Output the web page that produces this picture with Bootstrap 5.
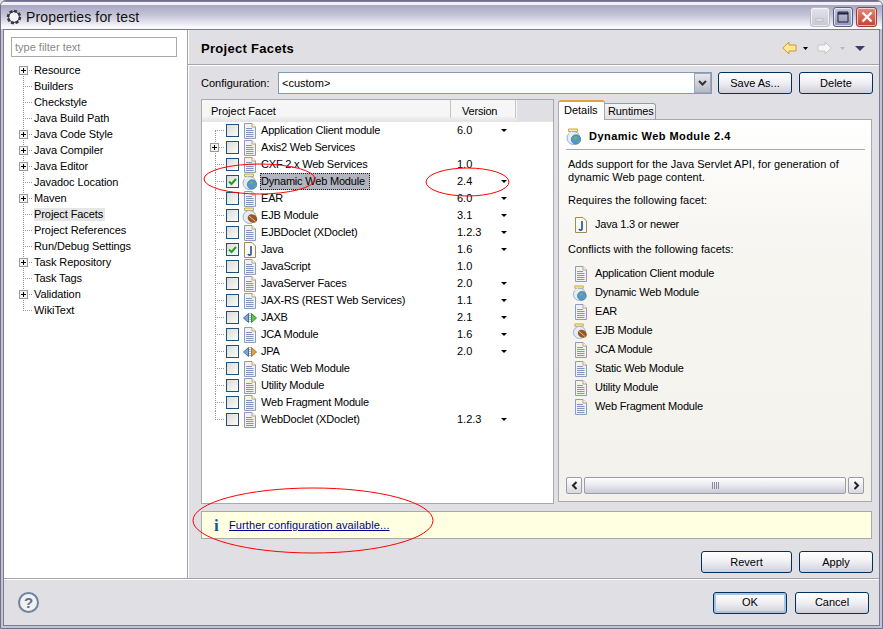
<!DOCTYPE html>
<html lang="en"><head><meta charset="utf-8"><title>Properties for test</title>
<link href="https://cdn.jsdelivr.net/npm/bootstrap@5.3.0/dist/css/bootstrap.min.css" rel="stylesheet">
<style>
html,body{margin:0;background:#e0dfe3}
body{font:11px/13px "Liberation Sans",Arial,sans-serif;color:#000;width:883px;height:629px;overflow:hidden;position:relative}
.dlg{width:883px;height:629px;border:1px solid #6f6f8a;border-radius:6px 6px 0 0;background:#c3c3d3;padding:0 2px 2px;display:flex;flex-direction:column}
.ttl{height:28px;flex:none;display:flex;align-items:center;padding:4px 5px 0 5px;background:linear-gradient(#7d7d98 0 1px,#f0f0f6 1px 4px,#a6a6c2 4px,#c4c4d8 14px,#e6e6ee 22px,#fafafc 26px,#fafafc 28px);margin:0 -2px;border-radius:5px 5px 0 0}
.ttl-txt{font:14px/18px "Liberation Sans",sans-serif;margin-left:4px;color:#111;letter-spacing:.15px}
.wbt{width:20px;height:20px;border-radius:3px;margin-left:3px;display:flex;align-items:center;justify-content:center;box-shadow:inset 0 0 0 1px rgba(255,255,255,.65)}
.wb-min{background:linear-gradient(#e3e3ea,#c6c7d4);border:1px solid #b9b9c9}
.wb-max{background:linear-gradient(#c3c7da,#9297b6);border:1px solid #5b6084}
.wb-close{background:linear-gradient(#e68a7a,#c63f30);border:1px solid #a23a30;width:21px}
.inner{flex:1;display:flex;flex-direction:column;border:1px solid #7d7d90;background:#e0dfe3;min-height:0}
.mid{flex:1;display:flex;min-height:0;border-bottom:1px solid #a3a3a8}
.side{width:184px;flex:none;background:#fff;border-right:1px solid #a3a3a8;box-shadow:1px 0 0 #fff;padding:7px 10px 0 7px}
.flt{height:20px;width:166px;border:1px solid #a9aaae;border-radius:0;padding:0 3px;font:inherit;color:#888}
.flt::placeholder{color:#8a8a8a;opacity:1}
.stree{margin:5px 0 0 2px;letter-spacing:-.08px}
.srow{height:16px;display:flex;align-items:center;white-space:nowrap}
.stw{width:20px;height:16px;flex:none;display:flex;align-items:center;margin-right:1px;background-image:repeating-linear-gradient(to bottom,#999 0 1px,transparent 1px 2px),repeating-linear-gradient(to right,#999 0 1px,transparent 1px 2px);background-size:1px 100%,9px 1px;background-position:10px 0,10px center;background-repeat:no-repeat}
.stw-f{background-size:1px 50%,9px 1px;background-position:10px bottom,10px center}
.stw-l{background-size:1px 50%,9px 1px;background-position:10px top,10px center}
.pl{width:9px;height:9px;flex:none;border:1px solid #9a9a9a;background:linear-gradient(#000,#000) center/5px 1px no-repeat,linear-gradient(#000,#000) center/1px 5px no-repeat,#f3f3ee;margin-left:6px}
.sel-s{background:#e6e6e6;padding:0 2px 0 0}
.mn{flex:1;min-width:0;padding:0 6px 0 0}
.mn-h{height:35px;border-bottom:1px solid #a3a3a8;box-shadow:0 1px 0 #fff;margin-right:-6px;padding:2px 13px 0 13px;display:flex;align-items:center}
.mn-t{font-weight:700;font-size:13px;flex:1;letter-spacing:.3px}
.cfg{display:flex;align-items:center;margin:7px 0 0 13px;height:22px}
.cfg-l{width:77px;flex:none}
.cmb{width:434px;height:22px;border:1px solid #7f9db9;background:#fff;display:flex;align-items:center;padding-left:3px;margin-right:6px}
.cmb-t{flex:1}
.cmb-b{width:17px;height:20px;background:linear-gradient(#e8e8ee,#b9b9c6);border:1px solid #a4a4b2;display:flex;align-items:center;justify-content:center}
.xbtn{width:74px;height:22px;padding:0;border:1px solid #00305f;border-radius:3px;background:linear-gradient(#fff 0,#f1f1f4 45%,#cfcfdd 100%);font:inherit;color:#000;line-height:19px}
.xbtn:hover{background:#eee;color:#000}
.xbtn-def{box-shadow:inset 0 0 0 2px #a5c4e9}
.xbtn-w{width:91px}
.cols{display:flex;margin:5px 0 0 13px;height:405px}
.tbl{width:353px;flex:none;background:#fff;border:1px solid #a9aab0}
.thd{height:22px;display:flex;background:linear-gradient(#f6f6f6,#f6f6f6 75%,#e4e4e4);border-bottom:1px solid #e4e4e4}
.th1{width:249px;padding:5px 0 0 9px;border-right:1px solid #c6c6c6;margin-bottom:3px}
.th2{width:65px;padding:5px 0 0 11px;border-right:1px solid #c6c6c6;margin-bottom:3px;letter-spacing:-.2px}
.th3{flex:1;background:#e0dfe3;margin-left:1px}
.frow{height:17px;display:flex;align-items:center;white-space:nowrap}
.ftw{width:23px;height:17px;flex:none;display:flex;align-items:center;margin-right:1px;background-image:repeating-linear-gradient(to bottom,#999 0 1px,transparent 1px 2px),repeating-linear-gradient(to right,#999 0 1px,transparent 1px 2px);background-size:1px 100%,10px 1px;background-position:13px 0,13px center;background-repeat:no-repeat}
.ftw .pl{margin-left:8px}
.ftw-f{background-size:1px 50%,10px 1px;background-position:13px bottom,13px center}
.ftw-l{background-size:1px 50%,10px 1px;background-position:13px top,13px center}
.cb{width:13px;height:13px;flex:none;border:1px solid #1c5180;background:linear-gradient(135deg,#dcdcd7,#fbfbf9);display:flex;align-items:center;justify-content:center}
.ic{width:14px;height:16px;flex:none;margin-left:4px}
.ic2{width:16px;height:17px;flex:none;margin-left:3px;margin-right:-1px}
.fn{width:197px;margin-left:3px;padding-left:1px;flex:none;height:17px;line-height:17px;letter-spacing:-.2px}
.fn-sel>span{display:inline-block;background:#b2b4bf;outline:1px dotted #222;outline-offset:-1px;margin-left:-1px;padding:0 5px 0 1px}
.fv{width:44px;flex:none}
.tri{width:0;height:0;border:3px solid transparent;border-top:3px solid #000;border-bottom:0}
.rgt{flex:1;margin-left:4px;min-width:0;display:flex;flex-direction:column;padding-top:1px}
.tabs{display:flex;align-items:flex-end;height:20px;margin-bottom:-1px}
.tab1{width:47px;height:20px;background:#fff;border:1px solid #a9aab0;border-bottom:0;border-top:2px solid #e6a23c;border-radius:3px 3px 0 0;padding:2px 0 0 5px;position:relative;z-index:1}
.tab2{width:51px;height:17px;background:linear-gradient(#f4f4f2,#e2e2ea);border:1px solid #8f9db2;border-radius:0 3px 0 0;padding:1px 0 0 3px;border-left:0;letter-spacing:-.1px}
.pnl{width:314px;height:383px;border:1px solid #a9aab0;background:linear-gradient(#fff 0,#f7f6f2 30%,#f2f1eb 100%);padding:0 7px;display:flex;flex-direction:column}
.pnl-h{display:flex;align-items:center;height:30px;padding-top:4px;font-weight:700;border-bottom:1px solid #a9a9a9;font-size:11px;margin-right:-1px;letter-spacing:.45px}
.pnl-h svg{margin:0 7px 0 0}
.pt{margin:0 0 0 2px;letter-spacing:.03px}
.pt-a{margin-top:9px}
.pt-b{margin-top:10px}
.lrow{height:19px;display:flex;align-items:center;padding-left:6px;white-space:nowrap;letter-spacing:-.2px}
.lrow .ic{margin:0 7px 0 2px}
.lrow .jar{width:16px;margin:0 7px 0 0}
.sbar{display:flex;height:17px;margin-top:auto;margin-bottom:7px;gap:2px}
.sb-b{width:16px;flex:none;border:1px solid #9c9ca8;border-radius:2px;background:linear-gradient(#fff,#d8d8e0);display:flex;align-items:center;justify-content:center}
.sb-t{flex:1;border:1px solid #9c9ca8;border-radius:2px;background:linear-gradient(#fff,#e8e8ee 50%,#c9cad6);display:flex;align-items:center;justify-content:center;gap:1px}
.sb-t i{display:block;width:1px;height:7px;background:#8a8a9a}
.inf{height:28px;margin:7px 1px 0 13px;background:#ffffe1;border:1px solid #a9aab0;display:flex;align-items:center}
.inf-i{font:700 17px/17px "Liberation Serif",serif;color:#0f5a9c;margin-left:12px;width:15px}
.inf a{color:#00008f;letter-spacing:.1px}
.brow{display:flex;justify-content:flex-end;gap:7px;margin-top:12px}
.foot{height:46px;flex:none;display:flex;align-items:center;border-top:1px solid #fff;padding:0 10px 0 14px}
.hlp{width:21px;height:21px;border:2px solid #71829c;border-radius:50%;background:#f1f1f4;color:#5f6f8a;font:700 15px/17px "Liberation Sans",sans-serif;text-align:center;flex:none}
.ovl{position:absolute;left:0;top:0;pointer-events:none}
.dfs{position:absolute;width:0;height:0}
</style></head>
<body>
<svg class="dfs"><defs>
<symbol id="doc" viewBox="0 0 14 16"><path d="M1.500.5h7.500l3.500 3.500v11.500h-11z" fill="#f3f1e8" stroke="#8d9bbd"/><path d="M9 .5v3.500h3.500" fill="#fff" stroke="#b6a26c"/><path d="M3 5.500h6M3 7.500h7.500M3 9.500h7.500M3 11.500h7.500M3 13.500h7.500" stroke="#7f94c4"/></symbol>
<symbol id="java" viewBox="0 0 14 16"><path d="M1.500.5h7.500l3.500 3.500v11.500h-11z" fill="#fbf8ef" stroke="#a28a4c"/><path d="M8 4v8c0 1.500-2.500 1.500-3 0" fill="none" stroke="#1c50a8" stroke-width="1.600"/></symbol>
<symbol id="jar" viewBox="0 0 16 17"><path d="M2.500 1h9v2.500h-9z" fill="#f8e9a8" stroke="#c8a848"/><circle cx="7.500" cy="10" r="6.500" fill="#e4ecf6" stroke="#9aaec6"/><circle cx="10" cy="11.500" r="4.700" fill="#4f97d6" stroke="#2f6aa6" stroke-width=".6"/><path d="M7 10l3-2.500 1.500 2-2 2.500zM11 13.500l3-1.500-.8 3z" fill="#76b24c"/><path d="M3 6c1-1.500 2-2 3-2" stroke="#fff" fill="none"/></symbol>
<symbol id="ejb" viewBox="0 0 16 17"><path d="M2.500 1h9v2.500h-9z" fill="#f8e9a8" stroke="#c8a848"/><circle cx="7.500" cy="10" r="6.500" fill="#e4ecf6" stroke="#9aaec6"/><ellipse cx="10.500" cy="11.500" rx="5" ry="4" fill="#9a5527" transform="rotate(30 10.500 11.500)"/><path d="M7 9l6.500 5.500" stroke="#e8c59a"/></symbol>
<symbol id="axg" viewBox="0 0 14 16"><path d="M5.500 3.500v9L.5 8z" fill="#7fa6d2" stroke="#3c6ea8"/><path d="M8.500 3.500v9l5-4.500z" fill="#5ec24f" stroke="#2f9a2a"/><path d="M7 3v10" stroke="#777" stroke-dasharray="1 1"/></symbol>
<symbol id="axo" viewBox="0 0 14 16"><path d="M5.500 3.500v9L.5 8z" fill="#7fa6d2" stroke="#3c6ea8"/><path d="M8.500 3.500v9l5-4.500z" fill="#dba348" stroke="#a8782c"/><path d="M7 3v10" stroke="#777" stroke-dasharray="1 1"/></symbol>
<symbol id="chk" viewBox="0 0 9 9"><path d="M1 4.500l2.500 2.500L8 2" fill="none" stroke="#21a121" stroke-width="2"/></symbol>
</defs></svg>

<div class="dlg">
  <div class="ttl">
    <svg width="16" height="16" viewBox="0 0 16 16"><circle cx="8" cy="8" r="6" fill="#f4f4f6" stroke="#3a3a4a" stroke-width="2.600" stroke-dasharray="3 1.600"/><circle cx="8" cy="8" r="5.400" fill="none" stroke="#2f2f3f"/></svg>
    <span class="ttl-txt flex-grow-1">Properties for test</span>
    <div class="wbt wb-min"><svg width="10" height="10" viewBox="0 0 10 10"><rect x="1" y="7" width="7" height="2" fill="#f4f4f8" stroke="#9a9aac" stroke-width=".5"/></svg></div>
    <div class="wbt wb-max"><svg width="12" height="12" viewBox="0 0 12 12"><path d="M1 1h10v10H1z" fill="none" stroke="#20203a"/><path d="M1 2.500h10" stroke="#20203a" stroke-width="2"/></svg></div>
    <div class="wbt wb-close"><svg width="12" height="12" viewBox="0 0 12 12"><path d="M1.500 1.500l9 9M10.500 1.500l-9 9" stroke="#fff" stroke-width="2.400"/></svg></div>
  </div>
  <div class="inner">
    <div class="mid">
      <aside class="side">
        <input class="form-control flt" placeholder="type filter text">
        <ul class="list-unstyled stree">
          <li class="srow"><span class="stw stw-f"><span class="pl"></span></span>Resource</li>
          <li class="srow"><span class="stw"></span>Builders</li>
          <li class="srow"><span class="stw"></span>Checkstyle</li>
          <li class="srow"><span class="stw"></span>Java Build Path</li>
          <li class="srow"><span class="stw"><span class="pl"></span></span>Java Code Style</li>
          <li class="srow"><span class="stw"><span class="pl"></span></span>Java Compiler</li>
          <li class="srow"><span class="stw"><span class="pl"></span></span>Java Editor</li>
          <li class="srow"><span class="stw"></span>Javadoc Location</li>
          <li class="srow"><span class="stw"><span class="pl"></span></span>Maven</li>
          <li class="srow"><span class="stw"></span><span class="sel-s">Project Facets</span></li>
          <li class="srow"><span class="stw"></span>Project References</li>
          <li class="srow"><span class="stw"></span>Run/Debug Settings</li>
          <li class="srow"><span class="stw"><span class="pl"></span></span>Task Repository</li>
          <li class="srow"><span class="stw"></span>Task Tags</li>
          <li class="srow"><span class="stw"><span class="pl"></span></span>Validation</li>
          <li class="srow"><span class="stw stw-l"></span>WikiText</li>
        </ul>
      </aside>
      <main class="mn">
        <div class="mn-h">
          <span class="mn-t">Project Facets</span>
          <svg width="84" height="14" viewBox="0 0 84 14"><path d="M7 1v3h7v6H7v3L.7 7z" fill="#fde89a" stroke="#d5962a"/><path d="M21 6h5l-2.500 3z" fill="#000"/><path d="M43 1v3h-7v6h7v3l6.300-6z" fill="#f6f6f4" stroke="#c6c6c2"/><path d="M58 6h5l-2.500 3z" fill="#b9b9b9"/><path d="M73 5h10l-5 5z" fill="#3d3a6e"/></svg>
        </div>
        <div class="cfg">
          <span class="cfg-l">Configuration:</span>
          <div class="cmb"><span class="cmb-t">&lt;custom&gt;</span><span class="cmb-b"><svg width="9" height="7" viewBox="0 0 9 7"><path d="M1 1l3.500 3.500L8 1" fill="none" stroke="#333" stroke-width="2"/></svg></span></div>
          <button class="btn xbtn" type="button">Save As...</button>
          <button class="btn xbtn ms-auto" type="button">Delete</button>
        </div>
        <div class="cols">
          <section class="tbl">
            <div class="thd"><div class="th1">Project Facet</div><div class="th2">Version</div><div class="th3"></div></div>
            <ul class="list-unstyled m-0">
              <li class="frow"><span class="ftw ftw-f"></span><span class="cb"></span><svg class="ic"><use href="#doc"/></svg><span class="fn">Application Client module</span><span class="fv">6.0</span><span class="tri"></span></li>
              <li class="frow"><span class="ftw"><span class="pl"></span></span><span class="cb"></span><svg class="ic"><use href="#doc"/></svg><span class="fn">Axis2 Web Services</span></li>
              <li class="frow"><span class="ftw"></span><span class="cb"></span><svg class="ic"><use href="#doc"/></svg><span class="fn">CXF 2.x Web Services</span><span class="fv">1.0</span></li>
              <li class="frow"><span class="ftw"></span><span class="cb"><svg width="9" height="9"><use href="#chk"/></svg></span><svg class="ic2"><use href="#jar"/></svg><span class="fn fn-sel"><span>Dynamic Web Module</span></span><span class="fv">2.4</span><span class="tri"></span></li>
              <li class="frow"><span class="ftw"></span><span class="cb"></span><svg class="ic"><use href="#doc"/></svg><span class="fn">EAR</span><span class="fv">6.0</span><span class="tri"></span></li>
              <li class="frow"><span class="ftw"></span><span class="cb"></span><svg class="ic2"><use href="#ejb"/></svg><span class="fn">EJB Module</span><span class="fv">3.1</span><span class="tri"></span></li>
              <li class="frow"><span class="ftw"></span><span class="cb"></span><svg class="ic"><use href="#doc"/></svg><span class="fn">EJBDoclet (XDoclet)</span><span class="fv">1.2.3</span><span class="tri"></span></li>
              <li class="frow"><span class="ftw"></span><span class="cb"><svg width="9" height="9"><use href="#chk"/></svg></span><svg class="ic"><use href="#java"/></svg><span class="fn">Java</span><span class="fv">1.6</span><span class="tri"></span></li>
              <li class="frow"><span class="ftw"></span><span class="cb"></span><svg class="ic"><use href="#doc"/></svg><span class="fn">JavaScript</span><span class="fv">1.0</span></li>
              <li class="frow"><span class="ftw"></span><span class="cb"></span><svg class="ic"><use href="#doc"/></svg><span class="fn">JavaServer Faces</span><span class="fv">2.0</span><span class="tri"></span></li>
              <li class="frow"><span class="ftw"></span><span class="cb"></span><svg class="ic"><use href="#doc"/></svg><span class="fn">JAX-RS (REST Web Services)</span><span class="fv">1.1</span><span class="tri"></span></li>
              <li class="frow"><span class="ftw"></span><span class="cb"></span><svg class="ic"><use href="#axg"/></svg><span class="fn">JAXB</span><span class="fv">2.1</span><span class="tri"></span></li>
              <li class="frow"><span class="ftw"></span><span class="cb"></span><svg class="ic"><use href="#doc"/></svg><span class="fn">JCA Module</span><span class="fv">1.6</span><span class="tri"></span></li>
              <li class="frow"><span class="ftw"></span><span class="cb"></span><svg class="ic"><use href="#axo"/></svg><span class="fn">JPA</span><span class="fv">2.0</span><span class="tri"></span></li>
              <li class="frow"><span class="ftw"></span><span class="cb"></span><svg class="ic"><use href="#doc"/></svg><span class="fn">Static Web Module</span></li>
              <li class="frow"><span class="ftw"></span><span class="cb"></span><svg class="ic"><use href="#doc"/></svg><span class="fn">Utility Module</span></li>
              <li class="frow"><span class="ftw"></span><span class="cb"></span><svg class="ic"><use href="#doc"/></svg><span class="fn">Web Fragment Module</span></li>
              <li class="frow"><span class="ftw ftw-l"></span><span class="cb"></span><svg class="ic"><use href="#doc"/></svg><span class="fn">WebDoclet (XDoclet)</span><span class="fv">1.2.3</span><span class="tri"></span></li>
            </ul>
          </section>
          <section class="rgt">
            <div class="tabs"><div class="tab1">Details</div><div class="tab2">Runtimes</div></div>
            <div class="pnl">
              <div class="pnl-h"><svg width="16" height="17"><use href="#jar"/></svg>Dynamic Web Module 2.4</div>
              <p class="pt mt-2 mb-0">Adds support for the Java Servlet API, for generation of dynamic Web page content.</p>
              <p class="pt mb-0 pt-b">Requires the following facet:</p>
              <div class="lrow mt-2"><svg class="ic"><use href="#java"/></svg>Java 1.3 or newer</div>
              <p class="pt mb-2 pt-a">Conflicts with the following facets:</p>
              <div class="lrow"><svg class="ic"><use href="#doc"/></svg>Application Client module</div>
              <div class="lrow"><svg class="ic jar"><use href="#jar"/></svg>Dynamic Web Module</div>
              <div class="lrow"><svg class="ic"><use href="#doc"/></svg>EAR</div>
              <div class="lrow"><svg class="ic jar"><use href="#ejb"/></svg>EJB Module</div>
              <div class="lrow"><svg class="ic"><use href="#doc"/></svg>JCA Module</div>
              <div class="lrow"><svg class="ic"><use href="#doc"/></svg>Static Web Module</div>
              <div class="lrow"><svg class="ic"><use href="#doc"/></svg>Utility Module</div>
              <div class="lrow"><svg class="ic"><use href="#doc"/></svg>Web Fragment Module</div>
              <div class="sbar">
                <span class="sb-b"><svg width="7" height="9" viewBox="0 0 7 9"><path d="M5.500 1L2 4.500 5.500 8" fill="none" stroke="#222" stroke-width="2"/></svg></span>
                <span class="sb-t"><i></i><i></i><i></i><i></i></span>
                <span class="sb-b"><svg width="7" height="9" viewBox="0 0 7 9"><path d="M1.500 1L5 4.500 1.500 8" fill="none" stroke="#222" stroke-width="2"/></svg></span>
              </div>
            </div>
          </section>
        </div>
        <div class="inf"><span class="inf-i">i</span><a href="#">Further configuration available...</a></div>
        <div class="brow"><button class="btn xbtn xbtn-w" type="button">Revert</button><button class="btn xbtn" type="button">Apply</button></div>
      </main>
    </div>
    <div class="foot">
      <div class="hlp flex-shrink-0">?</div>
      <div class="ms-auto d-flex gap-2"><button class="btn xbtn xbtn-def" type="button">OK</button><button class="btn xbtn" type="button">Cancel</button></div>
    </div>
  </div>
</div>
<svg class="ovl" width="883" height="629" fill="none" stroke="#f00"><ellipse cx="259.500" cy="179" rx="55.500" ry="15"/><ellipse cx="467.500" cy="182" rx="41.500" ry="14"/><ellipse cx="313" cy="520.500" rx="120" ry="32.500"/></svg>
</body></html>
